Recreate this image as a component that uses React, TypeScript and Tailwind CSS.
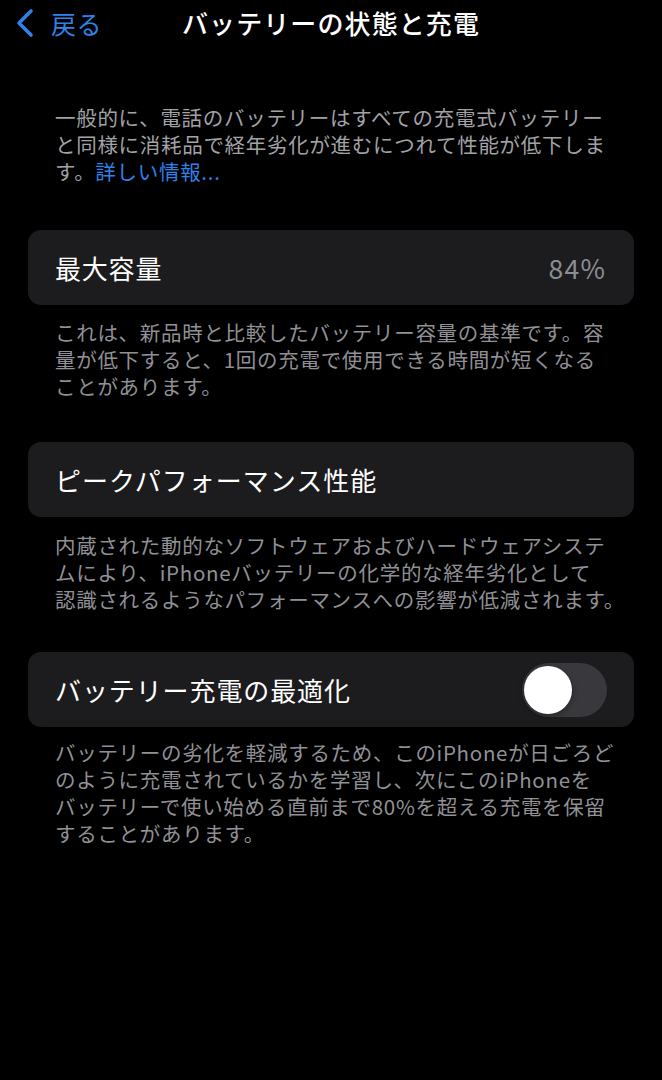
import React from "react";

const font = { fontFamily: '"Noto Sans CJK JP", "Noto Sans", sans-serif' };

function Toggle() {
  return (
    <div className="relative h-[54px] w-[85px] shrink-0 rounded-full bg-[#39393d]">
      <div className="absolute left-[2px] top-[3px] h-[48px] w-[48px] rounded-full bg-white shadow-[0_2px_6px_rgba(0,0,0,0.35)]" />
    </div>
  );
}

function Card({ children }: { children: React.ReactNode }) {
  return (
    <div className="mx-[28px] flex h-[75px] items-center justify-between rounded-[13px] bg-[#1c1c1e] pl-[27px] pr-[28px]">
      {children}
    </div>
  );
}

function Note({ lines, className = "" }: { lines: React.ReactNode[]; className?: string }) {
  return (
    <div className={"px-[55px] text-[20.5px] leading-[27px] tracking-[0.7px] text-[#909096] " + className}>
      {lines.map((l, i) => (
        <div key={i} className="whitespace-nowrap">
          {l}
        </div>
      ))}
    </div>
  );
}

export default function App() {
  return (
    <div className="min-h-[1080px] w-[662px] bg-black text-white" style={font}>
      <header className="relative flex h-[46px] items-center">
        <div className="flex items-center pl-[14px] text-[#2f82ea]">
          <svg width="22" height="30" viewBox="0 0 22 30" fill="none">
            <path d="M17 3 L5 15 L17 27" stroke="currentColor" strokeWidth="3.6" strokeLinecap="round" strokeLinejoin="round" />
          </svg>
          <span className="ml-[15px] text-[25px] leading-none tracking-[0.5px]">戻る</span>
        </div>
        <h1 className="absolute left-0 right-0 text-center text-[26px] font-medium leading-none tracking-[1.1px]">
          バッテリーの状態と充電
        </h1>
      </header>

      <Note
        className="mt-[58px] text-[#a2a2a7]"
        lines={[
          "一般的に、電話のバッテリーはすべての充電式バッテリー",
          "と同様に消耗品で経年劣化が進むにつれて性能が低下しま",
          <>
            す。<span className="text-[#2f82ea]">詳しい情報...</span>
          </>,
        ]}
      />

      <div className="mt-[45px]">
        <Card>
          <span className="text-[26px] tracking-[0.8px]">最大容量</span>
          <span className="text-[26.5px] tracking-[1.2px] text-[#8d8d93]">84%</span>
        </Card>
      </div>
      <Note
        className="mt-[14px]"
        lines={[
          "これは、新品時と比較したバッテリー容量の基準です。容",
          "量が低下すると、1回の充電で使用できる時間が短くなる",
          "ことがあります。",
        ]}
      />

      <div className="mt-[42px]">
        <Card>
          <span className="text-[26px] tracking-[1px]">ピークパフォーマンス性能</span>
        </Card>
      </div>
      <Note
        className="mt-[15px]"
        lines={[
          "内蔵された動的なソフトウェアおよびハードウェアシステ",
          "ムにより、iPhoneバッテリーの化学的な経年劣化として",
          "認識されるようなパフォーマンスへの影響が低減されます。",
        ]}
      />

      <div className="mt-[39px]">
        <Card>
          <span className="text-[26px] tracking-[0.9px]">バッテリー充電の最適化</span>
          <div className="-mr-[1px]">
            <Toggle />
          </div>
        </Card>
      </div>
      <Note
        className="mt-[12px]"
        lines={[
          "バッテリーの劣化を軽減するため、このiPhoneが日ごろど",
          "のように充電されているかを学習し、次にこのiPhoneを",
          "バッテリーで使い始める直前まで80%を超える充電を保留",
          "することがあります。",
        ]}
      />
    </div>
  );
}
